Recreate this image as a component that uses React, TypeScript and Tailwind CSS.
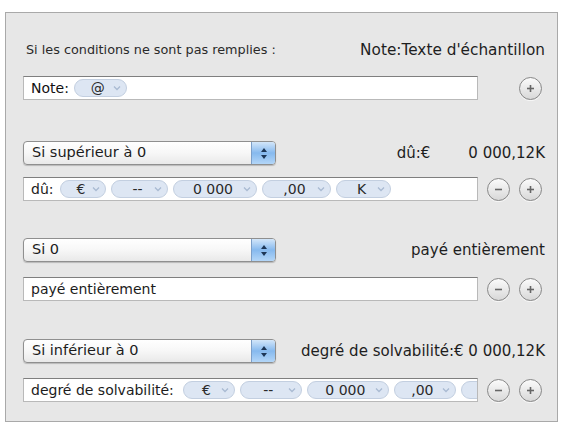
import React from "react";

const font = "font-['DejaVu_Sans',_'Liberation_Sans',_sans-serif]";

function Chevron() {
  return (
    <svg width="8" height="6" viewBox="0 0 8 6" className="shrink-0">
      <polyline points="1,1.5 4,4.5 7,1.5" fill="none" stroke="#a9bad2" strokeWidth="1.3" />
    </svg>
  );
}

function Token({ label, w }: { label: string; w: number }) {
  return (
    <div
      className="flex h-[18px] shrink-0 items-center rounded-full border border-[#c3cfe0] bg-[#dde6f3] pl-2 pr-[5px]"
      style={{ width: w }}
    >
      <span className="flex-1 whitespace-nowrap text-center text-[14px] leading-none text-[#2a2a2a]">{label}</span>
      <Chevron />
    </div>
  );
}

function RoundButton({ kind }: { kind: "plus" | "minus" }) {
  return (
    <div className="flex h-[23px] w-[23px] shrink-0 items-center justify-center rounded-full border-[1.5px] border-[#878787] bg-gradient-to-b from-[#fbfbfb] to-[#d8d8d8] shadow-[0_1px_0_#f6f6f6]">
      <svg width="11" height="11" viewBox="0 0 11 11">
        <line x1="2" y1="5.5" x2="9" y2="5.5" stroke="#666" strokeWidth="1.6" />
        {kind === "plus" && <line x1="5.5" y1="2" x2="5.5" y2="9" stroke="#666" strokeWidth="1.6" />}
      </svg>
    </div>
  );
}

function Field({ children }: { children: React.ReactNode }) {
  return (
    <div className="flex h-[24px] w-[455px] shrink-0 items-center gap-[5px] overflow-hidden border border-[#b9b9b9] border-t-[#7f7f7f] bg-white pl-[7px] text-[14px] text-[#1c1c1c]">
      {children}
    </div>
  );
}

function PopUp({ label }: { label: string }) {
  return (
    <div className="flex h-[24px] w-[253px] shrink-0 overflow-hidden rounded-[4px] border border-[#8f8f8f] bg-gradient-to-b from-white via-[#f7f7f7] to-[#e9e9e9] shadow-[0_1px_1px_rgba(0,0,0,0.2)]">
      <div className="flex flex-1 items-center whitespace-nowrap pl-[8px] text-[14.5px] text-[#1c1c1c]">{label}</div>
      <div className="flex w-[24px] flex-col items-center justify-center gap-[3px] border-l border-[#7c9fc9] bg-gradient-to-b from-[#d3e6f9] via-[#86b9ee] to-[#b3d6f8]">
        <svg width="6" height="4" viewBox="0 0 6 4">
          <polygon points="0,4 3,0 6,4" fill="#1d3656" />
        </svg>
        <svg width="6" height="4" viewBox="0 0 6 4">
          <polygon points="0,0 3,4 6,0" fill="#1d3656" />
        </svg>
      </div>
    </div>
  );
}

function PopUpRow({ label, children }: { label: string; children: React.ReactNode }) {
  return (
    <div className="flex items-center">
      <PopUp label={label} />
      <div className="ml-auto flex items-center whitespace-nowrap text-[15px] text-[#1e1e1e]">{children}</div>
    </div>
  );
}

function FieldRow({ children, minus = true }: { children: React.ReactNode; minus?: boolean }) {
  return (
    <div className="flex items-center">
      <Field>{children}</Field>
      <div className="ml-[9px] w-[23px]">{minus && <RoundButton kind="minus" />}</div>
      <div className="ml-[9px]">
        <RoundButton kind="plus" />
      </div>
    </div>
  );
}

export default function App() {
  return (
    <div className={`h-[426px] w-[562px] bg-white pl-[5px] pt-[12px] ${font}`}>
      <div className="flex h-[410px] w-[553px] flex-col border border-[#a9a9a9] bg-[#e7e7e7] pl-[17px] pr-[12px] pt-[27px]">
        <div className="flex h-[20px] items-center">
          <span className="ml-[3px] whitespace-nowrap text-[12.8px] text-[#2a2a2a]">Si les conditions ne sont pas remplies :</span>
          <span className="ml-auto whitespace-nowrap text-[15.3px] text-[#1e1e1e]">Note:Texte d'échantillon</span>
        </div>

        <div className="mt-[16px]">
          <FieldRow minus={false}>
            <span className="shrink-0 whitespace-nowrap text-[#111]">Note:</span>
            <Token label="@" w={53} />
          </FieldRow>
        </div>

        <div className="mt-[41px]">
          <PopUpRow label="Si supérieur à 0">
            <span>dû:€</span>
            <span className="ml-[38px]">0 000,12K</span>
          </PopUpRow>
        </div>

        <div className="mt-[12px]">
          <FieldRow>
            <span className="mr-[2px] shrink-0 whitespace-nowrap">dû:</span>
            <Token label="€" w={46} />
            <Token label="--" w={57} />
            <Token label="0 000" w={84} />
            <Token label=",00" w={69} />
            <Token label="K" w={55} />
          </FieldRow>
        </div>

        <div className="mt-[37px]">
          <PopUpRow label="Si 0">
            <span>payé entièrement</span>
          </PopUpRow>
        </div>

        <div className="mt-[15px]">
          <FieldRow>
            <span className="shrink-0 whitespace-nowrap">payé entièrement</span>
          </FieldRow>
        </div>

        <div className="mt-[38px]">
          <PopUpRow label="Si inférieur à 0">
            <span>degré de solvabilité:€ 0 000,12K</span>
          </PopUpRow>
        </div>

        <div className="mt-[15px]">
          <FieldRow>
            <span className="mr-[4px] shrink-0 whitespace-nowrap">degré de solvabilité:</span>
            <Token label="€" w={52} />
            <Token label="--" w={62} />
            <Token label="0 000" w={82} />
            <Token label=",00" w={62} />
            <Token label="" w={40} />
          </FieldRow>
        </div>
      </div>
    </div>
  );
}
